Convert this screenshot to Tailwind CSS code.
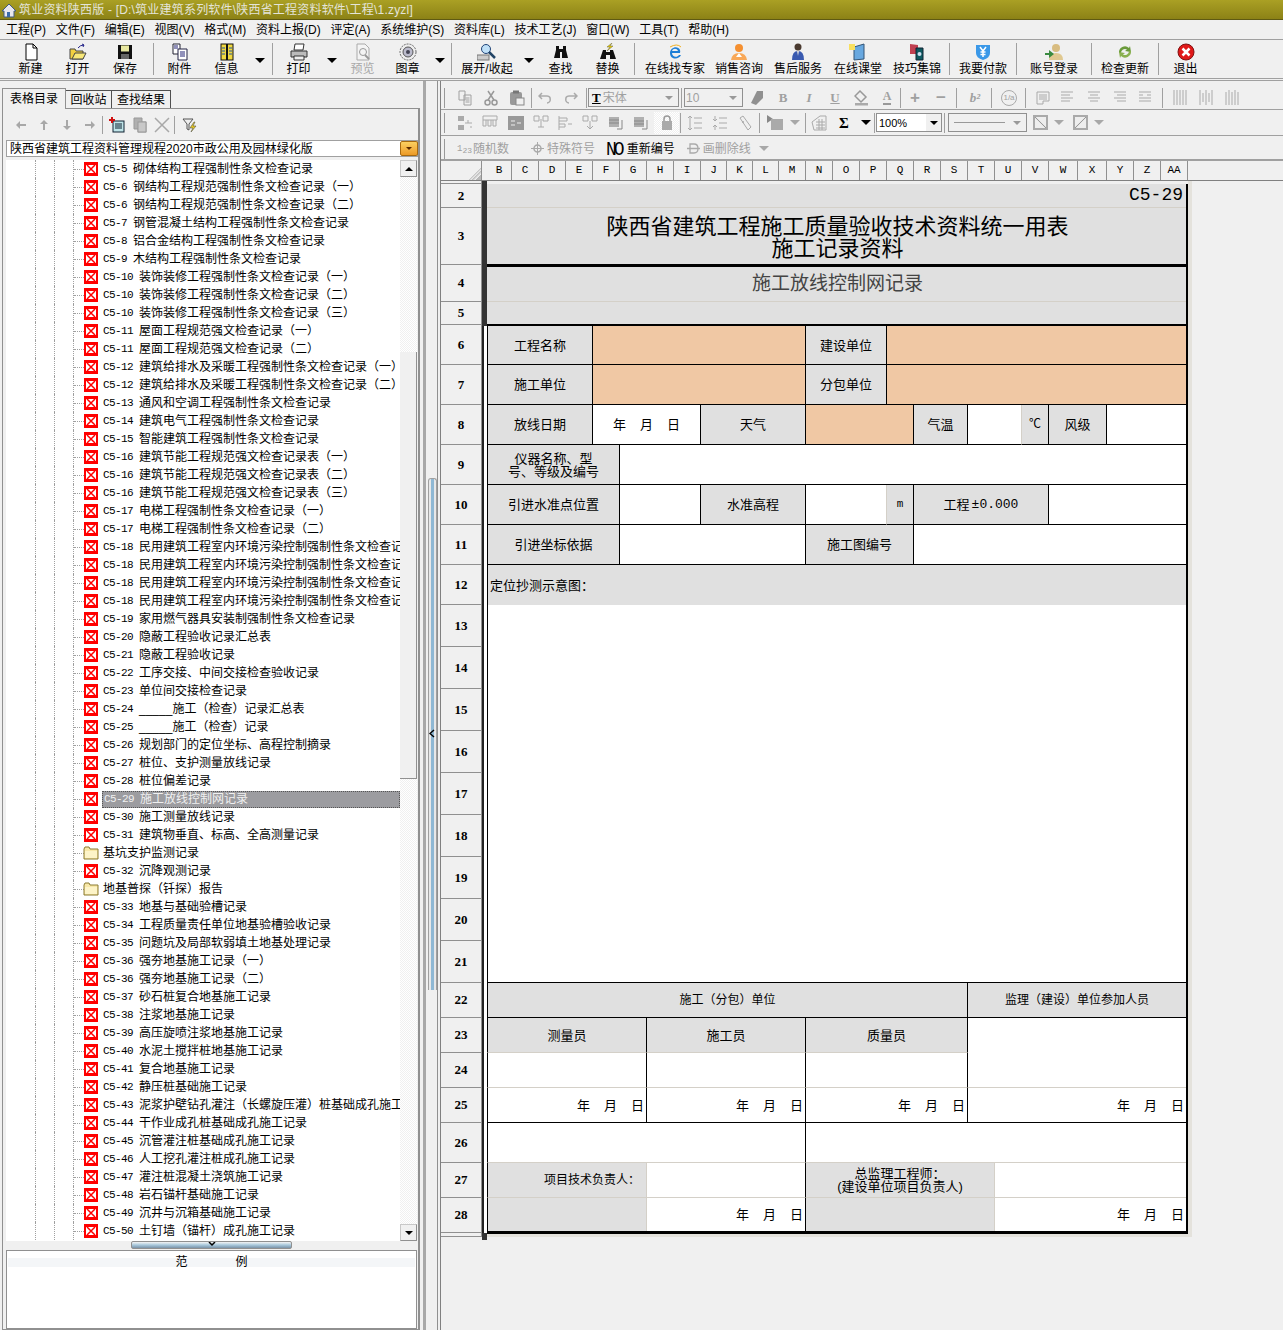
<!DOCTYPE html>
<html lang="zh-CN">
<head>
<meta charset="UTF-8">
<title>筑业资料陕西版</title>
<script src="https://cdn.jsdelivr.net/npm/@tailwindcss/browser@4"></script>
</head>
<body class="w-[1283px] h-[1330px] overflow-hidden bg-[#f0f0f0] text-black text-[12px] leading-[14px] font-['Liberation_Sans','Noto_Sans_CJK_SC',sans-serif]">

<!-- title bar -->
<div class="h-[20px] flex items-center bg-gradient-to-b from-[#aaa024] to-[#8c8216] border-b border-[#5f5a12] text-[#e4e4d8]">
  <svg class="w-[16px] h-[16px] ml-[1px] mr-[2px]" viewBox="0 0 16 16"><path d="M1 9 8 2l7 7-2 0v6H3V9z" fill="#e8e8f0" stroke="#405a80"/><rect x="6" y="10" width="3" height="5" fill="#3a6aa8"/></svg>
  <span class="tracking-[0.2px]">筑业资料陕西版 - [D:\筑业建筑系列软件\陕西省工程资料软件\工程\1.zyzl]</span>
</div>

<!-- menu -->
<div class="h-[20px] flex items-center pl-[6px] gap-[9.75px] bg-[#f0f0f0] border-b border-[#a0a0a0]">
  <span>工程(P)</span><span>文件(F)</span><span>编辑(E)</span><span>视图(V)</span><span>格式(M)</span><span>资料上报(D)</span><span>评定(A)</span><span>系统维护(S)</span><span>资料库(L)</span><span>技术工艺(J)</span><span>窗口(W)</span><span>工具(T)</span><span>帮助(H)</span>
</div>

<!-- main toolbar -->
<div class="h-[39px] flex items-stretch border-b border-[#a0a0a0] pl-[7px]">
  <div class="w-[47px] flex flex-col items-center justify-end pb-[2px]"><svg class="w-[16px] h-[18px] mb-px" viewBox="0 0 16 18"><path d="M3 1h7l4 4v12H3z" fill="#fff" stroke="#000"/><path d="M10 1v4h4" fill="none" stroke="#000"/></svg>新建</div>
  <div class="w-[47px] flex flex-col items-center justify-end pb-[2px]"><svg class="w-[18px] h-[18px] mb-px" viewBox="0 0 18 18"><path d="M1 6h5l1 2h7v8H1z" fill="#f2d040" stroke="#444"/><path d="M3 16l3-6h11l-3 6z" fill="#f8e878" stroke="#444"/><path d="M9 5q2-3 6-3M13 1l2 1-1 2" fill="none" stroke="#228"/></svg>打开</div>
  <div class="w-[48px] flex flex-col items-center justify-end pb-[2px]"><svg class="w-[16px] h-[18px] mb-px" viewBox="0 0 16 18"><rect x="1" y="2" width="14" height="14" fill="#111"/><rect x="4" y="2.500" width="8" height="6" fill="#e8e8a0"/><rect x="4" y="11" width="8" height="5" fill="#666"/></svg>保存</div>
  <div class="w-px my-[3px] ml-[4px] bg-[#a0a0a0]"></div>
  <div class="w-[47px] ml-[2px] flex flex-col items-center justify-end pb-[2px]"><svg class="w-[18px] h-[18px] mb-px" viewBox="0 0 18 18"><path d="M2 1h7v10H2z" fill="#fff" stroke="#223"/><path d="M7 6h9v11H7z" fill="#fff" stroke="#224"/><path d="M9 9h5M9 11h5M9 13h5M3 3h4M3 5h4" stroke="#227"/></svg>附件</div>
  <div class="w-[47px] flex flex-col items-center justify-end pb-[2px]"><svg class="w-[16px] h-[18px] mb-px" viewBox="0 0 16 18"><rect x="2" y="1" width="12" height="16" fill="#f0d840" stroke="#111"/><path d="M8 1v16" stroke="#111" stroke-width="2"/><path d="M3 5h3M3 8h3M3 11h3M10 5h3M10 8h3M10 11h3" stroke="#25a"/></svg>信息</div>
  <div class="w-[20px] flex items-center justify-center pt-[2px]"><span class="border-x-[5px] border-x-transparent border-t-[5px] border-t-black"></span></div>
  <div class="w-px my-[3px] ml-[2px] bg-[#a0a0a0]"></div>
  <div class="w-[47px] ml-[2px] flex flex-col items-center justify-end pb-[2px]"><svg class="w-[18px] h-[18px] mb-px" viewBox="0 0 18 18"><path d="M5 1h9l-1 6H4z" fill="#fff" stroke="#333"/><path d="M1 8h16v6H1z" fill="#bbb" stroke="#333"/><path d="M4 13h10v4H4z" fill="#eee" stroke="#333"/></svg>打印</div>
  <div class="w-[20px] flex items-center justify-center pt-[2px]"><span class="border-x-[5px] border-x-transparent border-t-[5px] border-t-black"></span></div>
  <div class="w-[41px] flex flex-col items-center justify-end pb-[2px] text-[#a8a8a8]"><svg class="w-[16px] h-[18px] mb-px" viewBox="0 0 16 18"><path d="M2 1h8l4 4v12H2z" fill="#f4f4f4" stroke="#aaa"/><circle cx="8" cy="9" r="3.500" fill="none" stroke="#999"/><path d="M10 12l4 4" stroke="#999" stroke-width="2"/></svg>预览</div>
  <div class="w-[49px] flex flex-col items-center justify-end pb-[2px]"><svg class="w-[18px] h-[18px] mb-px" viewBox="0 0 18 18"><circle cx="9" cy="9" r="8" fill="#eee" stroke="#666" stroke-dasharray="2 1"/><circle cx="9" cy="9" r="5" fill="#bbc" stroke="#555"/><circle cx="9" cy="9" r="2" fill="#445"/></svg>图章</div>
  <div class="w-[16px] flex items-center justify-center pt-[2px]"><span class="border-x-[5px] border-x-transparent border-t-[5px] border-t-black"></span></div>
  <div class="w-px my-[3px] ml-[3px] bg-[#a0a0a0]"></div>
  <div class="w-[66px] ml-[2px] flex flex-col items-center justify-end pb-[2px]"><svg class="w-[20px] h-[18px] mb-px" viewBox="0 0 20 18"><rect x="0" y="12" width="12" height="5" fill="#ccc" stroke="#777"/><circle cx="9" cy="6" r="4.500" fill="#bfe0f8" stroke="#247"/><path d="M12 9l6 6" stroke="#246" stroke-width="2.500"/></svg>展开/收起</div>
  <div class="w-[17px] flex items-center justify-center pt-[2px]"><span class="border-x-[5px] border-x-transparent border-t-[5px] border-t-black"></span></div>
  <div class="w-[47px] flex flex-col items-center justify-end pb-[2px]"><svg class="w-[14px] h-[18px] mb-px" viewBox="0 0 14 18"><path d="M2 3h3v3h4V3h3v4l2 8H8V9H6v6H0l2-8z" fill="#111"/></svg>查找</div>
  <div class="w-[47px] flex flex-col items-center justify-end pb-[2px]"><svg class="w-[18px] h-[18px] mb-px" viewBox="0 0 18 18"><path d="M4 7h3v2h4V7h3l3 9h-6v-4H7v4H1z" fill="#111"/><path d="M13 0 8 4h3L8 8l6-5h-3z" fill="#f0d000" stroke="#664" stroke-width=".5"/></svg>替换</div>
  <div class="w-px my-[3px] ml-[3px] bg-[#a0a0a0]"></div>
  <div class="w-[70px] ml-[5px] flex flex-col items-center justify-end pb-[2px]"><svg class="w-[16px] h-[18px] mb-px" viewBox="0 0 16 18"><path d="M13 10H5c0 4 5 5 7 2h2c-2 5-11 5-11-2 0-6 8-8 10-3 .4 1 .2 2 0 3zM5 8h6c-1-3-5-3-6 0z" fill="#1c7ed6"/><path d="M3 4q7-4 11 0" fill="none" stroke="#f0b020"/></svg>在线找专家</div>
  <div class="w-[58px] flex flex-col items-center justify-end pb-[2px]"><svg class="w-[18px] h-[18px] mb-px" viewBox="0 0 18 18"><circle cx="9" cy="5" r="4" fill="#f59030"/><path d="M1 17q1-7 8-7t8 7z" fill="#f8a858"/><path d="M9 10l-3 4h6z" fill="#fff"/></svg>销售咨询</div>
  <div class="w-[60px] flex flex-col items-center justify-end pb-[2px]"><svg class="w-[16px] h-[18px] mb-px" viewBox="0 0 16 18"><circle cx="8" cy="4" r="3.500" fill="#4a3a30"/><path d="M2 17q0-9 6-9t6 9z" fill="#3a5ab0"/><path d="M7 8h2l-1 5z" fill="#ddd"/></svg>售后服务</div>
  <div class="w-[60px] flex flex-col items-center justify-end pb-[2px]"><svg class="w-[18px] h-[18px] mb-px" viewBox="0 0 18 18"><path d="M5 4l10-3v15l-10 1z" fill="#68a8e0" stroke="#357"/><rect x="0" y="1" width="6" height="6" fill="#f8e060"/></svg>在线课堂</div>
  <div class="w-[58px] flex flex-col items-center justify-end pb-[2px]"><svg class="w-[18px] h-[18px] mb-px" viewBox="0 0 18 18"><path d="M2 1l8 1v9H2z" fill="#c04050"/><path d="M8 5h7v12H8z" fill="#0f5a60" stroke="#123"/><circle cx="11.500" cy="11" r="2" fill="#cde"/></svg>技巧集锦</div>
  <div class="w-px my-[3px] ml-[3px] bg-[#a0a0a0]"></div>
  <div class="w-[66px] flex flex-col items-center justify-end pb-[2px]"><svg class="w-[16px] h-[18px] mb-px" viewBox="0 0 16 18"><path d="M1 2h14v8q0 5-7 7-7-2-7-7z" fill="#3a98e8"/><path d="M5 4l3 4 3-4M8 8v6M5.500 9h5M5.500 11.500h5" fill="none" stroke="#fff" stroke-width="1.500"/></svg>我要付款</div>
  <div class="w-px my-[3px] bg-[#a0a0a0]"></div>
  <div class="w-[74px] flex flex-col items-center justify-end pb-[2px]"><svg class="w-[20px] h-[18px] mb-px" viewBox="0 0 20 18"><circle cx="12" cy="5" r="4" fill="#d8bc80"/><path d="M5 17q0-7 7-7t7 7z" fill="#e0c890"/><path d="M1 10h4V7l5 4-5 4v-3H1z" fill="#3a8a40"/></svg>账号登录</div>
  <div class="w-px my-[3px] bg-[#a0a0a0]"></div>
  <div class="w-[66px] flex flex-col items-center justify-end pb-[2px]"><svg class="w-[16px] h-[18px] mb-px" viewBox="0 0 16 18"><path d="M2 10a6 6 0 0 1 10-5l1-2 1 6-6-1 2-1.500A4 4 0 0 0 4 10z" fill="#6a9a3a"/><path d="M14 8a6 6 0 0 1-10 5l-1 2-1-6 6 1-2 1.500A4 4 0 0 0 12 8z" fill="#8ab050"/></svg>检查更新</div>
  <div class="w-px my-[3px] bg-[#a0a0a0]"></div>
  <div class="w-[53px] flex flex-col items-center justify-end pb-[2px]"><svg class="w-[18px] h-[18px] mb-px" viewBox="0 0 18 18"><circle cx="9" cy="9" r="8" fill="#e01818" stroke="#801010"/><path d="M5.500 5.500l7 7M12.500 5.500l-7 7" stroke="#fff" stroke-width="2.500"/></svg>退出</div>
</div>
<div class="h-[2px] border-b border-[#a0a0a0]"></div>

<div class="flex h-[1249px]">
  <!-- left panel -->
  <div class="w-[420px] pl-[2px] pt-[6px] flex flex-col">
    <div class="flex h-[21px] items-end">
      <div class="w-[64px] h-[21px] bg-[#f0f0f0] border-x border-t border-[#909090] flex items-center justify-center relative top-px z-10">表格目录</div>
      <div class="w-[46px] h-[18px] border-r border-t border-[#505050] flex items-center justify-center">回收站</div>
      <div class="w-[59px] h-[18px] border-r border-t border-[#505050] flex items-center justify-center">查找结果</div>
    </div>
    <div class="flex-1 border border-[#909090] border-r-2 flex flex-col pl-[3px] pr-px">
      <div class="h-[31px] flex items-center pl-[3px] text-[#b4b4b4]">
        <span class="w-[23px] flex justify-center"><svg class="w-[10px] h-[10px]" viewBox="0 0 10 10"><path d="M0 5l4-4v3h6v2H4v3z" fill="#a8a8a8"/></svg></span>
        <span class="w-[23px] flex justify-center"><svg class="w-[10px] h-[10px]" viewBox="0 0 10 10"><path d="M5 0l4 4H6v6H4V4H1z" fill="#a8a8a8"/></svg></span>
        <span class="w-[23px] flex justify-center"><svg class="w-[10px] h-[10px]" viewBox="0 0 10 10"><path d="M5 10l4-4H6V0H4v6H1z" fill="#a8a8a8"/></svg></span>
        <span class="w-[23px] flex justify-center"><svg class="w-[10px] h-[10px]" viewBox="0 0 10 10"><path d="M10 5L6 1v3H0v2h6v3z" fill="#a8a8a8"/></svg></span>
        <span class="w-px h-[18px] bg-[#a0a0a0] mx-px"></span>
        <span class="w-[23px] ml-px flex justify-center"><svg class="w-[16px] h-[16px]" viewBox="0 0 16 16"><rect x="4" y="4" width="11" height="11" fill="#bfe4e8" stroke="#123"/><path d="M6 7h7M6 9h7M6 11h7" stroke="#123"/><path d="M3 0v6M0 3h6" stroke="#d01010" stroke-width="2"/></svg></span>
        <span class="w-[23px] flex justify-center"><svg class="w-[16px] h-[16px]" viewBox="0 0 16 16"><path d="M2 1h8v4h4v10H6v-3H2z" fill="#b0b0b0" stroke="#999"/><rect x="6" y="5" width="8" height="10" fill="#c8c8c8" stroke="#999"/></svg></span>
        <span class="w-[22px] flex justify-center"><svg class="w-[16px] h-[16px]" viewBox="0 0 16 16"><path d="M1 1l14 14M15 1L1 15" stroke="#a8a8a8" stroke-width="1.500"/></svg></span>
        <span class="w-px h-[18px] bg-[#a0a0a0] mx-px"></span>
        <span class="w-[28px] flex justify-center"><svg class="w-[16px] h-[16px]" viewBox="0 0 16 16"><path d="M1 2h10L7 7v6L5 12V7z" fill="#eee" stroke="#555"/><path d="M12 5L8 11h3l-2 4 5-6h-3l2-4z" fill="#e8c820" stroke="#554" stroke-width=".6"/></svg></span>
      </div>
      <div class="h-[17px] flex items-center bg-white border border-[#a0a0a0] pl-[3px] relative mr-[-1px]">
        <span>陕西省建筑工程资料管理规程2020市政公用及园林绿化版</span>
        <span class="absolute right-[-1px] top-0 w-[18px] h-[15px] rounded-[2px] bg-gradient-to-b from-[#fbd060] to-[#ec9a24] border border-[#a86a10] flex items-center justify-center"><span class="border-x-[3px] border-x-transparent border-t-[3px] border-t-[#5a2a00]"></span></span>
      </div>
      <div class="h-[3px]"></div>
      <div class="h-[1081px] flex">
        <div id="tree" class="w-[394px] overflow-hidden bg-white"></div>
        <div class="w-[17px] flex flex-col">
          <div class="h-[17px] bg-[#f0f0f0] border border-[#c8c8c8] border-b-[#909090] border-r-[#909090] flex items-center justify-center"><span class="border-x-[4px] border-x-transparent border-b-[4px] border-b-black"></span></div>
          <div class="h-[175px] bg-[repeating-conic-gradient(#f0f0f0_0_25%,#ffffff_0_50%)] bg-[length:2px_2px]"></div>
          <div class="h-[427px] bg-[#f0f0f0] border-r border-b border-[#909090]"></div>
          <div class="flex-1 bg-[repeating-conic-gradient(#f0f0f0_0_25%,#ffffff_0_50%)] bg-[length:2px_2px]"></div>
          <div class="h-[17px] bg-[#f0f0f0] border border-[#c8c8c8] border-b-[#909090] border-r-[#909090] flex items-center justify-center"><span class="border-x-[4px] border-x-transparent border-t-[4px] border-t-black"></span></div>
        </div>
      </div>
      <div class="h-[9px] flex justify-center">
        <div class="w-[161px] h-[8px] rounded-[2px] border border-[#909090] bg-gradient-to-b from-[#f4f4f4] via-[#a8c8dc] to-[#7a92a8] flex justify-center"><svg class="w-[8px] h-[5px]" viewBox="0 0 8 5"><path d="M1 0l3 3 3-3" fill="none" stroke="#000" stroke-width="1.500"/></svg></div>
      </div>
      <div class="flex-1 bg-white border border-[#909090] pt-[7px] px-px">
        <div class="h-[9px] bg-[#f4f6f8] flex justify-center gap-[48px] text-[12px] leading-[9px]"><span>范</span><span>例</span></div>
      </div>
    </div>
  </div>

  <!-- splitter -->
  <div class="w-[20px] relative flex">
    <div class="w-[3px] ml-[3px] bg-[#a8a8a8]"></div>
    <div class="w-[11px] ml-[1px] border-r border-[#909090]"></div>
    <div class="absolute left-[8px] top-[397px] w-[9px] h-[512px] rounded-t-[3px] border-x border-t border-[#a0a0a0] bg-[#e8e8e8] flex justify-center"><div class="w-[3px] h-full bg-[#8fb8d4]"></div></div>
    <svg class="absolute left-[9px] top-[648px] w-[6px] h-[9px]" viewBox="0 0 6 9"><path d="M5 1L1 4.500 5 8" fill="none" stroke="#000" stroke-width="1.500"/></svg>
  </div>

  <!-- right area -->
  <div class="flex-1 border-l border-[#808080] flex flex-col">
    <div class="h-[29px] pt-[5px] flex items-center border-b border-[#a0a0a0] text-[#a0a0a0] font-bold">
      <span class="ml-[3px] w-[3px] h-[20px] border-l border-[#999] mr-[5px]"></span>
      <span class="w-[26px] flex justify-center"><svg class="w-[16px] h-[16px]" viewBox="0 0 16 16"><path d="M2 1h6v9H2zM7 5h7v10H7z" fill="#f0f0f0" stroke="#a0a0a0"/><path d="M8.500 8h4M8.500 10h4M8.500 12h4" stroke="#a0a0a0"/></svg></span>
      <span class="w-[26px] flex justify-center"><svg class="w-[14px] h-[16px]" viewBox="0 0 14 16"><path d="M4 1l6 9M10 1L4 10" stroke="#999" stroke-width="1.500"/><circle cx="3.500" cy="12.500" r="2.500" fill="none" stroke="#999" stroke-width="1.500"/><circle cx="10.500" cy="12.500" r="2.500" fill="none" stroke="#999" stroke-width="1.500"/></svg></span>
      <span class="w-[26px] flex justify-center"><svg class="w-[16px] h-[16px]" viewBox="0 0 16 16"><rect x="1" y="2" width="12" height="13" rx="2" fill="#999"/><rect x="4" y="0.500" width="6" height="3" fill="#777"/><rect x="7" y="8" width="8" height="7" fill="#f0f0f0" stroke="#888"/></svg></span>
      <span class="w-px h-[20px] ml-px bg-[#a0a0a0]"></span>
      <span class="w-[26px] flex justify-center"><svg class="w-[14px] h-[12px]" viewBox="0 0 14 12"><path d="M4 1L1 4l3 3M1 4h8q4 0 3 5-1 2-3 2" fill="none" stroke="#aaa" stroke-width="1.500"/></svg></span>
      <span class="w-[26px] flex justify-center"><svg class="w-[14px] h-[12px]" viewBox="0 0 14 12"><path d="M10 1l3 3-3 3M13 4H5Q1 4 2 9q1 2 3 2" fill="none" stroke="#aaa" stroke-width="1.500"/></svg></span>
      <span class="w-px h-[20px] ml-[2px] bg-[#a0a0a0]"></span>
      <div class="ml-px w-[91px] h-[19px] border border-[#909090] flex items-center pl-[3px] font-normal">
        <span class="font-['Liberation_Serif'] font-bold text-black text-[13px] mr-[2px] underline">T</span><span>宋体</span>
        <span class="ml-auto mr-[5px] border-x-[4px] border-x-transparent border-t-[4px] border-t-[#999]"></span>
      </div>
      <span class="w-px h-[20px] ml-[2px] bg-[#a0a0a0]"></span>
      <div class="ml-[2px] w-[59px] h-[19px] border border-[#909090] flex items-center pl-px font-normal">
        <span>10</span><span class="ml-auto mr-[5px] border-x-[4px] border-x-transparent border-t-[4px] border-t-[#999]"></span>
      </div>
      <span class="ml-[2px] w-[24px] flex justify-center"><svg class="w-[16px] h-[16px]" viewBox="0 0 16 16"><path d="M8 1h6v7l-7 7-5-2 2-4z" fill="#909090"/></svg></span>
      <span class="ml-px w-[26px] flex justify-center font-['Liberation_Serif'] text-[13px]">B</span>
      <span class="w-[26px] flex justify-center font-['Liberation_Serif'] italic text-[13px]">I</span>
      <span class="w-[26px] flex justify-center font-['Liberation_Serif'] underline text-[13px]">U</span>
      <span class="w-[26px] flex justify-center"><svg class="w-[15px] h-[16px]" viewBox="0 0 15 16"><path d="M6 1l6 6-5 5-6-6z" fill="none" stroke="#999" stroke-width="1.500"/><rect x="1" y="13" width="13" height="2.500" fill="#aaa"/></svg></span>
      <span class="w-[26px] flex justify-center"><span class="border-b-2 border-[#999] font-['Liberation_Serif'] text-[12px] leading-[13px]">A</span></span>
      <span class="w-px h-[20px] bg-[#a0a0a0]"></span>
      <span class="ml-px w-[26px] flex justify-center text-[17px] leading-[16px]">+</span>
      <span class="w-[26px] flex justify-center text-[17px] leading-[16px]">−</span>
      <span class="w-px h-[20px] ml-[2px] bg-[#a0a0a0]"></span>
      <span class="ml-[5px] w-[26px] flex justify-center font-['Liberation_Serif'] italic text-[13px]">b²</span>
      <span class="w-px h-[20px] ml-[3px] bg-[#a0a0a0]"></span>
      <span class="ml-[4px] w-[26px] flex justify-center"><span class="w-[16px] h-[16px] rounded-full border border-[#aaa] text-[8px] leading-[14px] text-center font-normal">1/a</span></span>
      <span class="w-px h-[20px] ml-[3px] bg-[#a0a0a0]"></span>
      <span class="ml-[4px] w-[26px] flex justify-center"><svg class="w-[14px] h-[14px]" viewBox="0 0 14 14"><path d="M1 1h12v9H7v3H1zM3 4h8M3 6h8M3 8h8" fill="none" stroke="#aaa"/></svg></span>
      <span class="w-[22px] flex justify-center"><svg class="w-[14px] h-[13px]" viewBox="0 0 14 13"><path d="M1 1h12M1 4h9M1 7h12M1 10h9" stroke="#aaa"/></svg></span>
      <span class="w-[32px] flex justify-center"><svg class="w-[14px] h-[13px]" viewBox="0 0 14 13"><path d="M1 1h12M3 4h8M1 7h12M3 10h8" stroke="#aaa"/></svg></span>
      <span class="w-[20px] flex justify-center"><svg class="w-[14px] h-[13px]" viewBox="0 0 14 13"><path d="M1 1h12M4 4h9M1 7h12M4 10h9" stroke="#aaa"/></svg></span>
      <span class="w-[30px] flex justify-center"><svg class="w-[14px] h-[13px]" viewBox="0 0 14 13"><path d="M1 1h12M1 4h4M9 4h4M1 7h12M1 10h12" stroke="#aaa"/></svg></span>
      <span class="w-px h-[20px] ml-[2px] bg-[#a0a0a0]"></span>
      <span class="ml-[4px] w-[26px] flex justify-center"><svg class="w-[14px] h-[15px]" viewBox="0 0 14 15"><path d="M1 0v15M4 0v15M7 0v15M10 0v15M13 0v15" stroke="#aaa"/></svg></span>
      <span class="w-[26px] flex justify-center"><svg class="w-[14px] h-[15px]" viewBox="0 0 14 15"><path d="M1 0v15M4 3v9M7 0v15M10 3v9M13 0v15" stroke="#aaa"/></svg></span>
      <span class="w-[26px] flex justify-center"><svg class="w-[14px] h-[15px]" viewBox="0 0 14 15"><path d="M1 2v13M4 0v15M7 2v13M10 0v15M13 2v13" stroke="#aaa"/></svg></span>
    </div>

    <div class="h-[26px] flex items-center border-b border-[#a0a0a0] text-[#a0a0a0]">
      <span class="ml-[3px] w-[3px] h-[20px] border-l border-[#999] mr-[5px]"></span>
      <span class="w-[25px] flex justify-center"><svg class="w-[16px] h-[16px]" viewBox="0 0 16 16"><path d="M1 1h6v5H1zM1 10h6v5H1z" fill="#aaa"/><path d="M8 8h7M11 5v3M14 11v2" stroke="#aaa"/></svg></span>
      <span class="w-[26px] flex justify-center"><svg class="w-[16px] h-[16px]" viewBox="0 0 16 16"><path d="M1 1h14v4H1zM1 5v6h3V5M6 5v6h3V5M11 5v6h3V5" fill="none" stroke="#aaa"/></svg></span>
      <span class="w-[25px] flex justify-center"><svg class="w-[16px] h-[16px]" viewBox="0 0 16 16"><rect x="0" y="1" width="16" height="14" fill="#999"/><path d="M3 6h4M9 8h4M3 10h4" stroke="#eee"/></svg></span>
      <span class="w-[25px] flex justify-center"><svg class="w-[16px] h-[16px]" viewBox="0 0 16 16"><path d="M1 1h5v5H1zM10 1h5v5h-5zM8 4v8M5 12h6" fill="none" stroke="#aaa"/></svg></span>
      <span class="w-[24px] flex justify-center"><svg class="w-[16px] h-[16px]" viewBox="0 0 16 16"><path d="M2 1v14M2 3h8v3H2M2 9h6v3H2M11 9h4" fill="none" stroke="#aaa"/></svg></span>
      <span class="w-[26px] flex justify-center"><svg class="w-[16px] h-[16px]" viewBox="0 0 16 16"><path d="M1 1h5v5H1zM10 1h5v5h-5zM8 6v8M5 11l3 3 3-3" fill="none" stroke="#aaa"/></svg></span>
      <span class="w-[25px] flex justify-center"><svg class="w-[16px] h-[16px]" viewBox="0 0 16 16"><rect x="1" y="2" width="10" height="10" fill="#b0b0b0"/><path d="M1 5h10M1 8h10M14 5v9h-5" fill="none" stroke="#888"/></svg></span>
      <span class="w-[26px] flex justify-center"><svg class="w-[16px] h-[16px]" viewBox="0 0 16 16"><rect x="1" y="2" width="10" height="10" fill="#b0b0b0"/><path d="M1 6h10M1 9h10M14 5v9h-5" fill="none" stroke="#888"/></svg></span>
      <span class="w-[25px] h-[22px] flex items-center justify-center bg-[repeating-conic-gradient(#f0f0f0_0_25%,#ffffff_0_50%)] bg-[length:2px_2px]"><svg class="w-[14px] h-[16px]" viewBox="0 0 14 16"><path d="M4 6V4a3 3 0 0 1 6 0v2" fill="none" stroke="#999" stroke-width="1.500"/><rect x="2" y="6" width="10" height="9" fill="#aaa"/></svg></span>
      <span class="w-px h-[20px] ml-px bg-[#a0a0a0]"></span>
      <span class="w-[26px] flex justify-center"><svg class="w-[15px] h-[16px]" viewBox="0 0 15 16"><path d="M3 1v14M1 3l2-2 2 2M1 13l2 2 2-2M7 3h8M7 8h8M7 13h8" fill="none" stroke="#aaa"/></svg></span>
      <span class="w-[25px] flex justify-center"><svg class="w-[15px] h-[16px]" viewBox="0 0 15 16"><path d="M3 1v5M3 10v5M1 4l2 2 2-2M1 12l2-2 2 2M7 3h8M7 8h8M7 13h8" fill="none" stroke="#aaa"/></svg></span>
      <span class="w-[26px] flex justify-center"><svg class="w-[14px] h-[16px]" viewBox="0 0 14 16"><path d="M2 3l3-2 8 11-3 3z" fill="none" stroke="#aaa"/><circle cx="5" cy="7" r="1" fill="#aaa"/></svg></span>
      <span class="w-px h-[20px] ml-px bg-[#a0a0a0]"></span>
      <span class="ml-[6px] w-[20px] flex justify-center"><svg class="w-[18px] h-[16px]" viewBox="0 0 18 16"><path d="M0 0l6 4-6 4z" fill="#888"/><rect x="4" y="4" width="12" height="11" fill="#aaa"/></svg></span>
      <span class="ml-[4px] border-x-[5px] border-x-transparent border-t-[5px] border-t-[#a8a8a8]"></span>
      <span class="w-px h-[20px] ml-[5px] bg-[#a0a0a0]"></span>
      <span class="ml-px w-[24px] flex justify-center"><svg class="w-[16px] h-[16px]" viewBox="0 0 16 16"><path d="M1 7l8-6h6v14H3z" fill="none" stroke="#aaa"/><path d="M5 7h9M5 10h9M5 13h9M8 4v11M11 4v11" stroke="#aaa"/></svg></span>
      <span class="ml-px w-[24px] flex justify-center text-black text-[15px] font-bold font-['Liberation_Serif']">Σ</span>
      <span class="ml-[5px] border-x-[5px] border-x-transparent border-t-[5px] border-t-black"></span>
      <span class="w-px h-[20px] ml-[3px] bg-[#a0a0a0]"></span>
      <div class="ml-px w-[66px] h-[19px] border border-[#909090] bg-white flex items-center pl-[2px] text-black text-[11px]">
        <span>100%</span><span class="ml-auto w-[15px] h-full bg-[#f0f0f0] flex items-center justify-center"><span class="border-x-[4px] border-x-transparent border-t-[4px] border-t-black"></span></span>
      </div>
      <span class="w-px h-[20px] ml-[2px] bg-[#a0a0a0]"></span>
      <div class="ml-[3px] w-[79px] h-[19px] border border-[#909090] flex items-center px-[5px]">
        <span class="flex-1 border-t border-[#999] mr-[8px]"></span><span class="border-x-[4px] border-x-transparent border-t-[4px] border-t-[#999]"></span>
      </div>
      <span class="ml-[6px] w-[15px] h-[15px] border-2 border-[#aaa] bg-[linear-gradient(45deg,#eee_45%,#999_50%,#eee_55%)]"></span>
      <span class="ml-[6px] border-x-[5px] border-x-transparent border-t-[5px] border-t-[#a8a8a8]"></span>
      <span class="ml-[9px] w-[15px] h-[15px] border-2 border-[#aaa] bg-[linear-gradient(135deg,#eee_45%,#999_50%,#eee_55%)]"></span>
      <span class="ml-[6px] border-x-[5px] border-x-transparent border-t-[5px] border-t-[#a8a8a8]"></span>
    </div>

    <div class="h-[25px] pt-[2px] flex items-center border-b-2 border-[#a0a0a0] text-[#a0a0a0]">
      <span class="ml-[3px] w-[3px] h-[20px] border-l border-[#999] mr-[10px]"></span>
      <span class="w-[15px] text-[9px] leading-[12px] font-['Liberation_Mono']">1<sub class="text-[8px]">23</sub></span>
      <span class="ml-[1px]">随机数</span>
      <svg class="ml-[22px] w-[13px] h-[13px]" viewBox="0 0 13 13"><circle cx="6.500" cy="6.500" r="3.500" fill="none" stroke="#aaa" stroke-width="1.500"/><path d="M6.500 0v13M0 6.500h13" stroke="#aaa"/></svg>
      <span class="ml-[3px]">特殊符号</span>
      <span class="ml-[11px] text-black font-['Liberation_Mono'] text-[18px] tracking-[-3px] scale-y-110">NO</span>
      <span class="ml-[5px] text-black">重新编号</span>
      <svg class="ml-[12px] w-[13px] h-[13px]" viewBox="0 0 13 13"><path d="M3 2h4q4 0 4 4.500T7 11H3zM3 2v9M0 6.500h13" fill="none" stroke="#aaa" stroke-width="1.300"/></svg>
      <span class="ml-[3px]">画删除线</span>
      <span class="ml-[8px] border-x-[5px] border-x-transparent border-t-[5px] border-t-[#a8a8a8]"></span>
    </div>

    <!-- column header -->
    <div class="h-[20px] flex border-b border-[#808080] font-['Liberation_Mono'] text-[11px]">
      <div class="w-[41px] border-r border-[#909090] bg-[linear-gradient(135deg,#f0f0f0_78%,#b8b8b8_78%,#f0f0f0_84%,#b8b8b8_84%,#f0f0f0_90%,#b8b8b8_90%)]"></div>
      <div class="w-[5px]"></div>
      <div class="grid grid-cols-[25px_27px_27px_27px_27px_27px_27px_27px_26px_26px_26px_27px_27px_27px_27px_27px_27px_27px_27px_27px_27px_29px_29px_27px_27px_27px] [&>span]:border-r [&>span]:border-[#909090] [&>span]:text-center [&>span]:leading-[19px]">
        <span>B</span><span>C</span><span>D</span><span>E</span><span>F</span><span>G</span><span>H</span><span>I</span><span>J</span><span>K</span><span>L</span><span>M</span><span>N</span><span>O</span><span>P</span><span>Q</span><span>R</span><span>S</span><span>T</span><span>U</span><span>V</span><span>W</span><span>X</span><span>Y</span><span>Z</span><span>AA</span>
      </div>
    </div>

    <!-- sheet -->
    <div class="flex">
      <div class="w-[41px] font-['Liberation_Serif'] font-bold text-[13px] [&>div]:flex [&>div]:items-center [&>div]:justify-center [&>div]:border-b [&>div]:border-r [&>div]:border-[#909090] [&>div]:bg-[#f0f0f0]">
        <div class="h-[3px]"></div>
        <div class="h-[24px]">2</div>
        <div class="h-[57px]">3</div>
        <div class="h-[37px]">4</div>
        <div class="h-[23px]">5</div>
        <div class="h-[40px]">6</div>
        <div class="h-[40px]">7</div>
        <div class="h-[40px]">8</div>
        <div class="h-[40px]">9</div>
        <div class="h-[40px]">10</div>
        <div class="h-[40px]">11</div>
        <div class="h-[40px]">12</div>
        <div class="h-[42px]">13</div>
        <div class="h-[42px]">14</div>
        <div class="h-[42px]">15</div>
        <div class="h-[42px]">16</div>
        <div class="h-[42px]">17</div>
        <div class="h-[42px]">18</div>
        <div class="h-[42px]">19</div>
        <div class="h-[42px]">20</div>
        <div class="h-[42px]">21</div>
        <div class="h-[35px]">22</div>
        <div class="h-[35px]">23</div>
        <div class="h-[35px]">24</div>
        <div class="h-[35px]">25</div>
        <div class="h-[40px]">26</div>
        <div class="h-[35px]">27</div>
        <div class="h-[35px]">28</div>
        <div class="h-[4px]"></div>
      </div>
      <!-- thick frame bar, solid beside the title rows -->
      <div class="w-[5px] flex flex-col">
        <div class="h-[145px] bg-[#333333]"></div>
        <div class="h-[907px] border-l-2 border-[#222222] bg-white"></div>
        <div class="h-[7px] bg-[#333333]"></div>
      </div>
      <div>
        <div class="h-[3px]"></div>
        <div class="grid w-[701px] grid-cols-[25px_27px_27px_27px_27px_27px_27px_27px_26px_26px_26px_27px_27px_27px_27px_27px_27px_27px_27px_27px_27px_29px_29px_27px_27px_25px] grid-rows-[24px_59px_35px_24px_39px_40px_40px_40px_40px_40px_40px_378px_35px_35px_35px_35px_40px_35px_33px] text-[13px] leading-[13px] border-r-2 border-b-[3px] border-black [&>div]:flex [&>div]:items-center [&>div]:justify-center [&>div]:text-center">
          <div class="col-span-26 bg-[#e0e0e0] border-b border-[#d4d0c8] !justify-end pr-[3px] font-['Liberation_Mono'] text-[18px]">C5-29</div>
          <div class="col-span-26 bg-[#e0e0e0] border-b-[3px] border-black text-[22px] leading-[22px] pt-[3px] pl-[2px]">陕西省建筑工程施工质量验收技术资料统一用表<br>施工记录资料</div>
          <div class="col-span-26 bg-[#e0e0e0] border-b border-[#d4d0c8] text-[19px] text-[#444444] leading-[22px] pl-[2px]">施工放线控制网记录</div>
          <div class="col-span-26 bg-[#e0e0e0] border-b-2 border-black"></div>

          <div class="col-span-4 bg-[#e0e0e0] border-b border-r border-black border-l">工程名称</div>
          <div class="col-span-8 bg-[#f0c8a4] border-b border-r border-black"></div>
          <div class="col-span-3 bg-[#e0e0e0] border-b border-r border-black">建设单位</div>
          <div class="col-span-11 bg-[#f0c8a4] border-b border-black"></div>

          <div class="col-span-4 bg-[#e0e0e0] border-b border-r border-black border-l">施工单位</div>
          <div class="col-span-8 bg-[#f0c8a4] border-b border-r border-black"></div>
          <div class="col-span-3 bg-[#e0e0e0] border-b border-r border-black">分包单位</div>
          <div class="col-span-11 bg-[#f0c8a4] border-b border-black"></div>

          <div class="col-span-4 bg-[#e0e0e0] border-b border-r border-black border-l">放线日期</div>
          <div class="col-span-4 bg-white border-b border-r border-black gap-[14px]"><span>年</span><span>月</span><span>日</span></div>
          <div class="col-span-4 bg-[#e0e0e0] border-b border-r border-black">天气</div>
          <div class="col-span-4 bg-[#f0c8a4] border-b border-r border-black"></div>
          <div class="col-span-2 bg-[#e0e0e0] border-b border-r border-black">气温</div>
          <div class="col-span-2 bg-white border-b border-r border-[#d4d0c8] border-b-black"></div>
          <div class="bg-[#e0e0e0] border-b border-r border-black text-[12px]">℃</div>
          <div class="col-span-2 bg-[#e0e0e0] border-b border-r border-black">风级</div>
          <div class="col-span-3 bg-white border-b border-black"></div>

          <div class="col-span-5 bg-[#e0e0e0] border-b border-r border-black border-l">仪器名称、型<br>号、等级及编号</div>
          <div class="col-span-21 bg-white border-b border-black"></div>

          <div class="col-span-5 bg-[#e0e0e0] border-b border-r border-black border-l">引进水准点位置</div>
          <div class="col-span-3 bg-white border-b border-r border-black"></div>
          <div class="col-span-4 bg-[#e0e0e0] border-b border-r border-black">水准高程</div>
          <div class="col-span-3 bg-white border-b border-r border-[#d4d0c8] border-b-black"></div>
          <div class="bg-[#e0e0e0] border-b border-r border-black font-['Liberation_Mono'] text-[11px]">m</div>
          <div class="col-span-5 bg-[#e0e0e0] border-b border-r border-black">工程<span class="font-['Liberation_Mono'] ml-[2px]">±0.000</span></div>
          <div class="col-span-5 bg-white border-b border-black"></div>

          <div class="col-span-5 bg-[#e0e0e0] border-b border-r border-black border-l">引进坐标依据</div>
          <div class="col-span-7 bg-white border-b border-r border-black"></div>
          <div class="col-span-4 bg-[#e0e0e0] border-b border-r border-black">施工图编号</div>
          <div class="col-span-10 bg-white border-b border-black"></div>

          <div class="col-span-26 bg-[#e0e0e0] !justify-start pl-[2px] border-l border-black">定位抄测示意图：</div>
          <div class="col-span-26 bg-white border-b border-black border-l"></div>

          <div class="col-span-18 bg-[#e0e0e0] border-b border-r border-black border-l text-[12px]">施工（分包）单位</div>
          <div class="col-span-8 bg-[#e0e0e0] border-b border-black text-[12px]">监理（建设）单位参加人员</div>

          <div class="col-span-6 bg-[#e0e0e0] border-b border-r border-[#d4d0c8] border-r-black border-l border-l-black">测量员</div>
          <div class="col-span-6 bg-[#e0e0e0] border-b border-r border-[#d4d0c8] border-r-black">施工员</div>
          <div class="col-span-6 bg-[#e0e0e0] border-b border-r border-[#d4d0c8] border-r-black">质量员</div>
          <div class="col-span-8 row-span-2 bg-white border-b border-[#d4d0c8]"></div>

          <div class="col-span-6 bg-white border-b border-r border-[#d4d0c8] border-r-black border-l border-l-black"></div>
          <div class="col-span-6 bg-white border-b border-r border-[#d4d0c8] border-r-black"></div>
          <div class="col-span-6 bg-white border-b border-r border-[#d4d0c8] border-r-black"></div>

          <div class="col-span-6 bg-white border-b border-r border-black border-l !justify-end gap-[14px] pr-[2px]"><span>年</span><span>月</span><span>日</span></div>
          <div class="col-span-6 bg-white border-b border-r border-black !justify-end gap-[14px] pr-[2px]"><span>年</span><span>月</span><span>日</span></div>
          <div class="col-span-6 bg-white border-b border-r border-black !justify-end gap-[14px] pr-[2px]"><span>年</span><span>月</span><span>日</span></div>
          <div class="col-span-8 bg-white border-b border-black !justify-end gap-[14px] pr-[2px]"><span>年</span><span>月</span><span>日</span></div>

          <div class="col-span-12 bg-white border-b border-r border-[#d4d0c8] border-r-black border-l border-l-black"></div>
          <div class="col-span-14 bg-white border-b border-[#d4d0c8]"></div>

          <div class="col-span-6 bg-[#e0e0e0] border-b border-r border-[#d4d0c8] border-l border-l-black !justify-end pr-[6px] text-[12px]">项目技术负责人：</div>
          <div class="col-span-6 bg-white border-b border-r border-[#d4d0c8] border-r-black"></div>
          <div class="col-span-7 bg-[#e0e0e0] border-b border-r border-[#d4d0c8]">总监理工程师：<br>(建设单位项目负责人)</div>
          <div class="col-span-7 bg-white border-b border-[#d4d0c8]"></div>

          <div class="col-span-6 bg-[#e0e0e0] border-r border-[#d4d0c8] border-l border-l-black"></div>
          <div class="col-span-6 bg-white border-r border-black !justify-end gap-[14px] pr-[2px]"><span>年</span><span>月</span><span>日</span></div>
          <div class="col-span-7 bg-[#e0e0e0] border-r border-[#d4d0c8]"></div>
          <div class="col-span-7 bg-white !justify-end gap-[14px] pr-[2px]"><span>年</span><span>月</span><span>日</span></div>
        </div>
        <div class="h-[3px] bg-[#e4e2dc]"></div>
      </div>
      <div class="w-[4px] h-[1056px] bg-[#e4e2dc]"></div>
    </div>
  </div>
</div>

<script>
  // tree rows: [code, title], code null means a folder node
  const rows = [
    ['C5-5','砌体结构工程强制性条文检查记录'],['C5-6','钢结构工程规范强制性条文检查记录（一）'],['C5-6','钢结构工程规范强制性条文检查记录（二）'],
    ['C5-7','钢管混凝土结构工程强制性条文检查记录'],['C5-8','铝合金结构工程强制性条文检查记录'],['C5-9','木结构工程强制性条文检查记录'],
    ['C5-10','装饰装修工程强制性条文检查记录（一）'],['C5-10','装饰装修工程强制性条文检查记录（二）'],['C5-10','装饰装修工程强制性条文检查记录（三）'],
    ['C5-11','屋面工程规范强文检查记录（一）'],['C5-11','屋面工程规范强文检查记录（二）'],
    ['C5-12','建筑给排水及采暖工程强制性条文检查记录（一）'],['C5-12','建筑给排水及采暖工程强制性条文检查记录（二）'],
    ['C5-13','通风和空调工程强制性条文检查记录'],['C5-14','建筑电气工程强制性条文检查记录'],['C5-15','智能建筑工程强制性条文检查记录'],
    ['C5-16','建筑节能工程规范强文检查记录表（一）'],['C5-16','建筑节能工程规范强文检查记录表（二）'],['C5-16','建筑节能工程规范强文检查记录表（三）'],
    ['C5-17','电梯工程强制性条文检查记录（一）'],['C5-17','电梯工程强制性条文检查记录（二）'],
    ['C5-18','民用建筑工程室内环境污染控制强制性条文检查记录'],['C5-18','民用建筑工程室内环境污染控制强制性条文检查记录'],['C5-18','民用建筑工程室内环境污染控制强制性条文检查记录'],['C5-18','民用建筑工程室内环境污染控制强制性条文检查记录'],
    ['C5-19','家用燃气器具安装制强制性条文检查记录'],['C5-20','隐蔽工程验收记录汇总表'],['C5-21','隐蔽工程验收记录'],['C5-22','工序交接、中间交接检查验收记录'],['C5-23','单位间交接检查记录'],
    ['C5-24','_____施工（检查）记录汇总表'],['C5-25','_____施工（检查）记录'],['C5-26','规划部门的定位坐标、高程控制摘录'],['C5-27','桩位、支护测量放线记录'],['C5-28','桩位偏差记录'],
    ['C5-29','施工放线控制网记录'],['C5-30','施工测量放线记录'],['C5-31','建筑物垂直、标高、全高测量记录'],
    [null,'基坑支护监测记录'],['C5-32','沉降观测记录'],[null,'地基普探（钎探）报告'],
    ['C5-33','地基与基础验槽记录'],['C5-34','工程质量责任单位地基验槽验收记录'],['C5-35','问题坑及局部软弱填土地基处理记录'],
    ['C5-36','强夯地基施工记录（一）'],['C5-36','强夯地基施工记录（二）'],['C5-37','砂石桩复合地基施工记录'],['C5-38','注浆地基施工记录'],
    ['C5-39','高压旋喷注浆地基施工记录'],['C5-40','水泥土搅拌桩地基施工记录'],['C5-41','复合地基施工记录'],['C5-42','静压桩基础施工记录'],
    ['C5-43','泥浆护壁钻孔灌注（长螺旋压灌）桩基础成孔施工记录'],['C5-44','干作业成孔桩基础成孔施工记录'],['C5-45','沉管灌注桩基础成孔施工记录'],
    ['C5-46','人工挖孔灌注桩成孔施工记录'],['C5-47','灌注桩混凝土浇筑施工记录'],['C5-48','岩石锚杆基础施工记录'],['C5-49','沉井与沉箱基础施工记录'],['C5-50','土钉墙（锚杆）成孔施工记录']
  ];
  const redIcon = '<svg class="w-[14px] h-[14px] shrink-0" viewBox="0 0 14 14"><rect width="14" height="14" fill="#ff0000"/><rect x="2" y="3" width="10" height="8" fill="#fff"/><path d="M3 3l8 8M11 3l-8 8" stroke="#ff0000" stroke-width="1.500"/></svg>';
  const folderIcon = '<svg class="w-[16px] h-[14px] shrink-0 ml-[-1px] mr-[-1px]" viewBox="0 0 16 14"><path d="M1 3l1-2h4l1 2h8v10H1z" fill="#f8e8a8" stroke="#8a7a30"/><path d="M2 5h12v7H2z" fill="#fdf4c8"/></svg>';
  document.getElementById('tree').innerHTML = rows.map(([code, title]) => {
    const selected = code === 'C5-29';
    const label = code
      ? `<span class="font-['Liberation_Mono'] text-[11px] tracking-[-0.6px] whitespace-pre">${code} </span><span>${title}</span>`
      : `<span>${title}</span>`;
    const textCls = selected
      ? 'ml-[4px] pl-px flex-1 h-[17px] flex items-center bg-[#9c9ca0] text-[#f0f0f0] border border-dotted border-[#555555]'
      : 'ml-[5px] flex-1 flex items-center';
    return `<div class="h-[18px] flex items-center whitespace-nowrap">
      <div class="w-[29px] shrink-0"></div>
      <div class="w-[19px] h-full shrink-0 border-l border-dotted border-[#a0a0a0]"></div>
      <div class="w-[19px] h-full shrink-0 border-l border-dotted border-[#a0a0a0]"></div>
      <div class="w-[11px] h-full shrink-0 border-l border-dotted border-[#a0a0a0] flex items-center"><div class="w-full border-t border-dotted border-[#a0a0a0]"></div></div>
      ${code ? redIcon : folderIcon}
      <div class="${textCls} overflow-hidden">${label}</div>
    </div>`;
  }).join('');
</script>
</body>
</html>
